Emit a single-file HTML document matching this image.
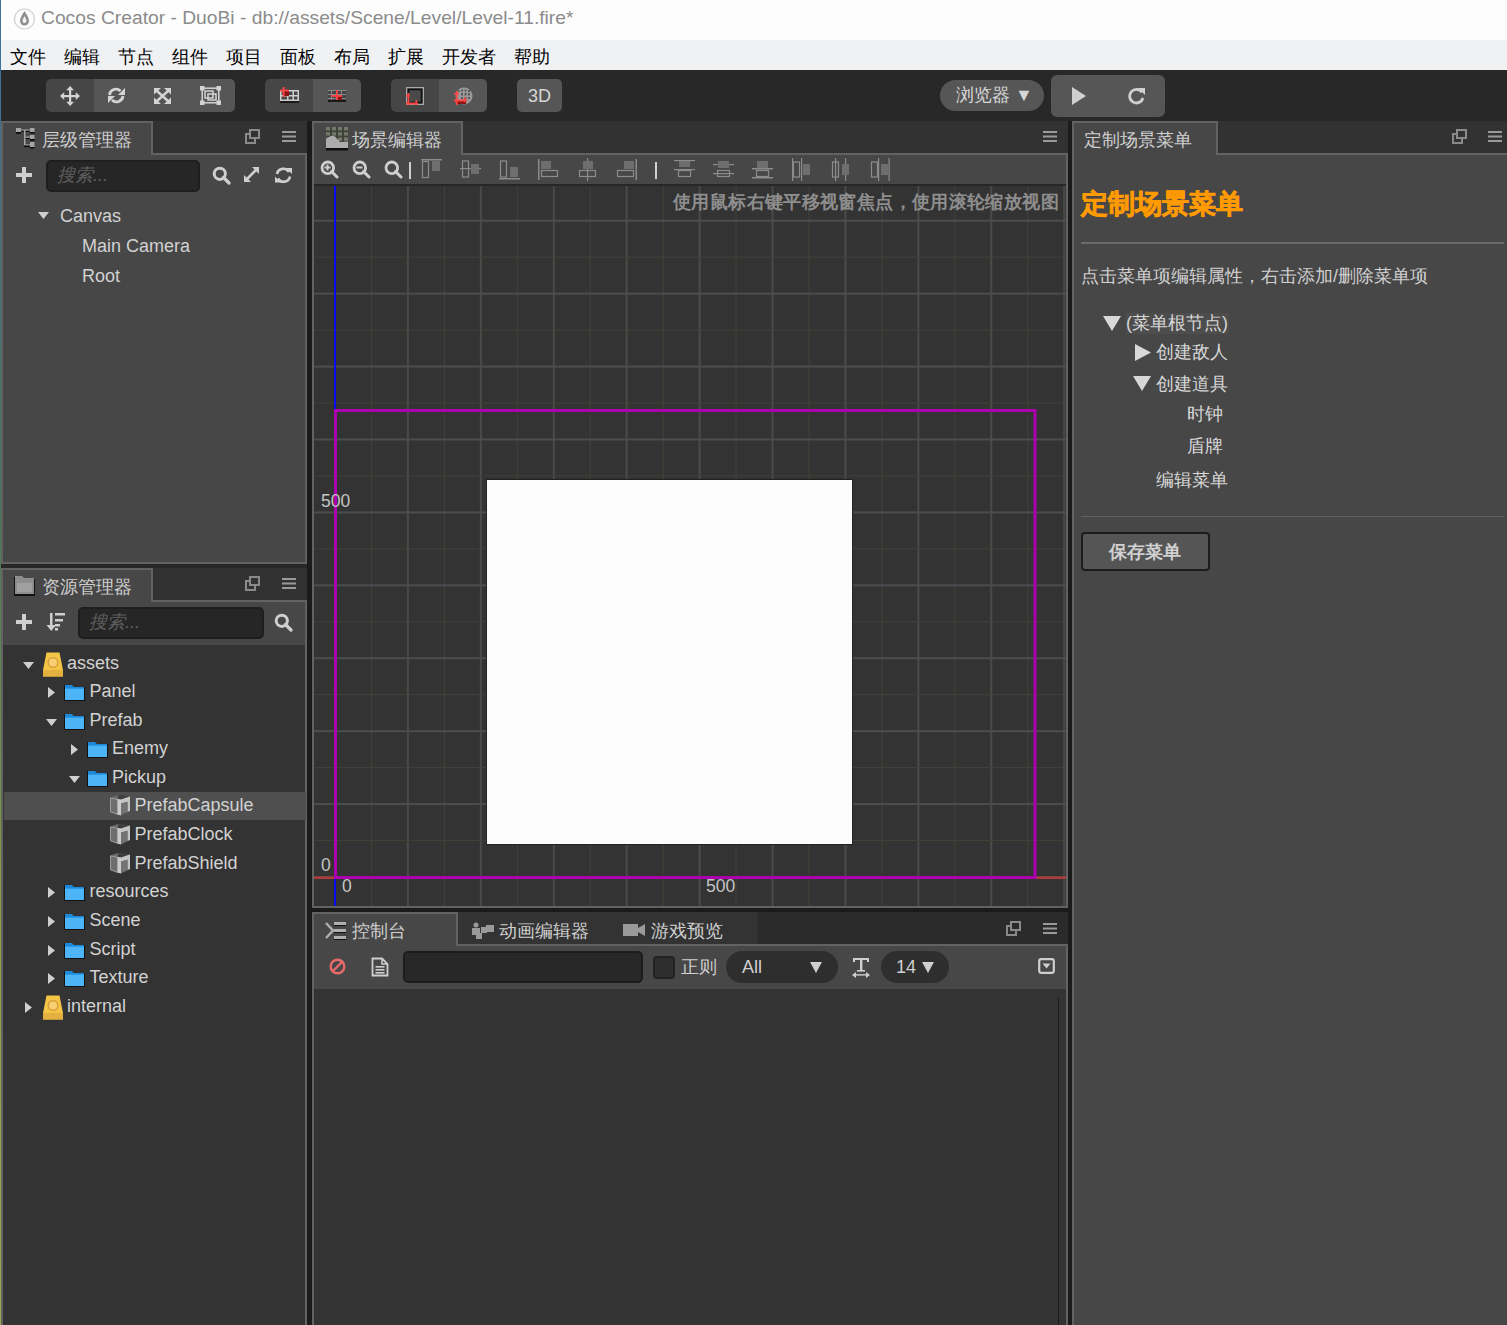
<!DOCTYPE html>
<html><head><meta charset="utf-8"><title>Cocos Creator</title>
<style>
html,body{margin:0;padding:0;}
body{width:1507px;height:1325px;overflow:hidden;position:relative;background:#1b1b1b;font-family:'Liberation Sans',sans-serif;}
svg{display:block;}
</style></head><body>
<div style="position:absolute;left:0px;top:0px;width:1507px;height:40px;background:#fdfdfd;"></div>
<div style="position:absolute;left:0;top:0;width:1px;height:1325px;background:linear-gradient(#3d6fa0,#4a7a5a 40%,#8fa040 70%,#9aaa50)"></div>
<svg style="position:absolute;left:13px;top:8px;" width="23" height="22" viewBox="0 0 23 22"><circle cx="11.5" cy="11" r="10" fill="none" stroke="#d0d0d0" stroke-width="1.2"/><path d="M11.5 3 C9 7 7 10 7 13 a4.5 4.5 0 0 0 9 0 C16 10 14 7 11.5 3z" fill="#8f8f8f"/><path d="M11.5 8 C10.5 10 9.5 11.5 9.5 13 a2 2 0 0 0 4 0 C13.5 11.5 12.5 10 11.5 8z" fill="#f4f4f4"/></svg>
<div style="position:absolute;left:41px;top:7px;font-size:19.25px;line-height:22px;color:#8b8b8b;white-space:nowrap;">Cocos Creator - DuoBi - db://assets/Scene/Level/Level-11.fire*</div>
<div style="position:absolute;left:1px;top:40px;width:1506px;height:30px;background:#f0f1f3;"></div>
<div style="position:absolute;left:10px;top:47px;font-size:18px;line-height:20px;color:#000;white-space:nowrap;">文件</div>
<div style="position:absolute;left:64px;top:47px;font-size:18px;line-height:20px;color:#000;white-space:nowrap;">编辑</div>
<div style="position:absolute;left:118px;top:47px;font-size:18px;line-height:20px;color:#000;white-space:nowrap;">节点</div>
<div style="position:absolute;left:172px;top:47px;font-size:18px;line-height:20px;color:#000;white-space:nowrap;">组件</div>
<div style="position:absolute;left:226px;top:47px;font-size:18px;line-height:20px;color:#000;white-space:nowrap;">项目</div>
<div style="position:absolute;left:280px;top:47px;font-size:18px;line-height:20px;color:#000;white-space:nowrap;">面板</div>
<div style="position:absolute;left:334px;top:47px;font-size:18px;line-height:20px;color:#000;white-space:nowrap;">布局</div>
<div style="position:absolute;left:388px;top:47px;font-size:18px;line-height:20px;color:#000;white-space:nowrap;">扩展</div>
<div style="position:absolute;left:442px;top:47px;font-size:18px;line-height:20px;color:#000;white-space:nowrap;">开发者</div>
<div style="position:absolute;left:514px;top:47px;font-size:18px;line-height:20px;color:#000;white-space:nowrap;">帮助</div>
<div style="position:absolute;left:1px;top:70px;width:1506px;height:51px;background:#282828;"></div>
<div style="position:absolute;left:46px;top:79px;width:189px;height:33px;border-radius:5px;overflow:hidden;"><div style="position:absolute;left:0px;top:0;width:48px;height:33px;background:#464646"></div><div style="position:absolute;left:48px;top:0;width:141px;height:33px;background:#565656"></div></div>
<div style="position:absolute;left:265px;top:79px;width:96px;height:33px;border-radius:5px;overflow:hidden;"><div style="position:absolute;left:0px;top:0;width:48px;height:33px;background:#464646"></div><div style="position:absolute;left:48px;top:0;width:48px;height:33px;background:#565656"></div></div>
<div style="position:absolute;left:391px;top:79px;width:96px;height:33px;border-radius:5px;overflow:hidden;"><div style="position:absolute;left:0px;top:0;width:48px;height:33px;background:#464646"></div><div style="position:absolute;left:48px;top:0;width:48px;height:33px;background:#565656"></div></div>
<div style="position:absolute;left:517px;top:79px;width:45px;height:33px;border-radius:5px;overflow:hidden;"><div style="position:absolute;left:0px;top:0;width:45px;height:33px;background:#565656"></div></div>
<div style="position:absolute;left:517px;top:86px;font-size:18px;line-height:20px;color:#d6d6d6;white-space:nowrap;width:45px;text-align:center;">3D</div>
<svg style="position:absolute;left:60px;top:86px;" width="20" height="20" viewBox="0 0 20 20"><g fill="#d4d4d4"><rect x="9" y="3" width="2.2" height="14"/><rect x="3" y="9" width="14" height="2.2"/><path d="M10.1 0 L14 4.2 H6.2Z M10.1 20 L14 15.8 H6.2Z M0 10.1 L4.2 6.2 V14Z M20 10.1 L15.8 6.2 V14Z"/></g></svg>
<svg style="position:absolute;left:107px;top:87px;" width="19" height="17" viewBox="0 0 19 17"><g fill="none" stroke="#d4d4d4" stroke-width="2.8"><path d="M2.5 8 A6.5 6.5 0 0 1 13.5 4"/><path d="M16 9 A6.5 6.5 0 0 1 5 13"/></g><path d="M18 1 V8 H11Z" fill="#d4d4d4"/><path d="M1 16 V9 H8Z" fill="#d4d4d4"/></svg>
<svg style="position:absolute;left:154px;top:88px;" width="17" height="16" viewBox="0 0 17 16"><g stroke="#d4d4d4" stroke-width="2.4" fill="none"><path d="M3 3 L14 13 M14 3 L3 13"/></g><g fill="#d4d4d4"><path d="M0 0 H7 L0 6.5Z M17 0 V6.5 L10 0Z M0 16 V9.5 L7 16Z M17 16 H10 L17 9.5Z"/></g></svg>
<svg style="position:absolute;left:200px;top:86px;" width="21" height="19" viewBox="0 0 21 19"><g fill="none" stroke="#d4d4d4" stroke-width="1.5"><rect x="2.2" y="2.2" width="16.6" height="14.6"/><rect x="5" y="5" width="8" height="7"/><rect x="8" y="8" width="8" height="6"/></g><g fill="#d4d4d4"><rect x="0" y="0" width="4.5" height="4.5"/><rect x="16.5" y="0" width="4.5" height="4.5"/><rect x="0" y="14.5" width="4.5" height="4.5"/><rect x="16.5" y="14.5" width="4.5" height="4.5"/></g></svg>
<svg style="position:absolute;left:280px;top:87px;" width="19" height="16" viewBox="0 0 19 16"><g fill="#cfcfcf"><rect x="0" y="3" width="19" height="1.5"/><rect x="0" y="8" width="19" height="1.5"/><rect x="0" y="12.5" width="19" height="1.5"/><rect x="0" y="3" width="1.5" height="11"/><rect x="7" y="3" width="1.5" height="11"/><rect x="12.5" y="3" width="1.5" height="11"/><rect x="17.5" y="3" width="1.5" height="11"/></g><rect x="4" y="4" width="5" height="5" fill="#8a1515"/><g fill="#ff4545"><rect x="2.7" y="0" width="1.8" height="10"/><rect x="0" y="2.6" width="9" height="1.8"/></g><rect x="0" y="14" width="19" height="2" fill="#1a1a1a"/></svg>
<svg style="position:absolute;left:328px;top:90px;" width="18" height="12" viewBox="0 0 18 12"><rect x="0" y="0" width="18" height="10" fill="#444"/><g fill="#8a8a8a"><rect x="0" y="0" width="18" height="1"/><rect x="0" y="4" width="18" height="1"/><rect x="0" y="8" width="18" height="1"/><rect x="3" y="0" width="1" height="10"/><rect x="8" y="0" width="1" height="10"/><rect x="13" y="0" width="1" height="10"/></g><rect x="9" y="6" width="5" height="4" fill="#8a1515"/><g fill="#ff4545"><rect x="8" y="0" width="1.8" height="10"/><rect x="3" y="5" width="11" height="1.8"/></g><rect x="0" y="10" width="18" height="2" fill="#1a1a1a"/></svg>
<svg style="position:absolute;left:406px;top:87px;" width="18" height="18" viewBox="0 0 18 18"><rect x="0.6" y="0.6" width="16.8" height="16.8" fill="none" stroke="#a8a8a8" stroke-width="1.2"/><rect x="2.5" y="2.5" width="13" height="13" fill="#4a4a4a" stroke="#111" stroke-width="1.6"/><g fill="#ff4545"><rect x="1.5" y="6" width="1.8" height="12"/><rect x="0" y="15.5" width="12" height="2"/><rect x="0" y="8" width="4" height="1.5"/><rect x="9.5" y="13" width="1.5" height="5"/></g></svg>
<svg style="position:absolute;left:454px;top:87px;" width="19" height="18" viewBox="0 0 19 18"><circle cx="10" cy="9" r="8.5" fill="#9a9a9a"/><g fill="#5a5a5a"><rect x="3.5" y="3" width="2" height="2"/><rect x="7" y="2.5" width="2" height="2"/><rect x="10.5" y="2.5" width="2" height="2"/><rect x="14" y="3" width="2" height="2"/><rect x="7" y="6" width="2" height="2.5"/><rect x="10.5" y="6" width="2" height="2.5"/><rect x="14" y="6" width="2" height="2.5"/><rect x="7" y="10" width="2" height="2"/><rect x="10.5" y="10" width="2" height="2"/><rect x="14" y="10" width="2" height="2"/></g><rect x="3" y="14" width="9" height="3" fill="#8a1515"/><g fill="#ff4545"><rect x="1.8" y="4" width="1.8" height="14"/><rect x="0" y="12.5" width="13" height="2"/><rect x="0" y="6" width="5" height="1.5"/><rect x="10" y="10" width="1.5" height="5"/></g></svg>
<div style="position:absolute;left:940px;top:80px;width:104px;height:31px;border-radius:16px;background:#565656;"></div>
<div style="position:absolute;left:956px;top:85px;font-size:18px;line-height:20px;color:#d6d6d6;white-space:nowrap;">浏览器 ▼</div>
<div style="position:absolute;left:1051px;top:75px;width:114px;height:42px;border-radius:6px;background:#565656;"></div>
<svg style="position:absolute;left:1071px;top:86px;" width="16" height="20" viewBox="0 0 16 20"><path d="M1 1 L15 10 L1 19Z" fill="#d0d0d0"/></svg>
<svg style="position:absolute;left:1127px;top:86px;" width="19" height="19" viewBox="0 0 19 19"><path d="M15 6.2 A6.8 6.8 0 1 0 16 12" fill="none" stroke="#d0d0d0" stroke-width="2.8"/><path d="M11 2 L18 2 L18 9Z" fill="#d0d0d0"/></svg>
<div style="position:absolute;left:1px;top:121px;width:306px;height:33px;background:#323232;"></div>
<div style="position:absolute;left:1px;top:153px;width:306px;height:411px;background:#474747;border:2px solid #626262;box-sizing:border-box;"></div>
<div style="position:absolute;left:1px;top:121px;width:152px;height:34px;background:#474747;border:2px solid #626262;border-bottom:none;box-sizing:border-box;"></div>
<svg style="position:absolute;left:16px;top:127px;" width="19" height="22" viewBox="0 0 19 22"><g fill="#a4a4a4"><rect x="0" y="1" width="5" height="4"/><rect x="14" y="1" width="4.5" height="4"/><rect x="14" y="8" width="4.5" height="4"/><rect x="14" y="15" width="4.5" height="5"/><rect x="5" y="2.5" width="9" height="1.2"/><rect x="8" y="3" width="1.5" height="15.5"/><rect x="9.5" y="9.5" width="4.5" height="1.2"/><rect x="9.5" y="17.3" width="4.5" height="1.2"/></g><g fill="#0c0c0c"><rect x="0" y="5" width="5" height="1.8"/><rect x="5" y="3.8" width="3" height="1"/><rect x="9.5" y="3.8" width="4.5" height="1"/><rect x="14" y="5" width="4.5" height="1.5"/><rect x="14" y="12" width="4.5" height="1.8"/><rect x="9.5" y="11" width="4.5" height="1"/><rect x="8" y="18.6" width="6" height="1.5"/><rect x="14" y="20" width="4.5" height="1.5"/></g></svg>
<div style="position:absolute;left:42px;top:130px;font-size:18px;line-height:20px;color:#cfcfcf;white-space:nowrap;">层级管理器</div>
<svg style="position:absolute;left:245px;top:129px;" width="15" height="15" viewBox="0 0 15 15"><g fill="none" stroke="#8a8a8a" stroke-width="2"><rect x="5" y="1" width="9" height="8"/><path d="M5 5 H1 V14 H10 V9"/></g></svg>
<svg style="position:absolute;left:282px;top:131px;" width="14" height="11" viewBox="0 0 14 11"><g fill="#9a9a9a"><rect x="0" y="0" width="14" height="2"/><rect x="0" y="4.5" width="14" height="2"/><rect x="0" y="9" width="14" height="2"/></g></svg>
<svg style="position:absolute;left:16px;top:167px;" width="16" height="16" viewBox="0 0 16 16"><g fill="#cfcfcf"><rect x="6" y="0" width="4" height="16"/><rect x="0" y="6" width="16" height="4"/></g></svg>
<div style="position:absolute;left:46px;top:160px;width:154px;height:32px;background:#262626;border:2px solid #1e1e1e;border-radius:5px;box-sizing:border-box;"></div>
<div style="position:absolute;left:57px;top:165px;font-size:18px;line-height:20px;color:#5e5e5e;white-space:nowrap;font-style:italic;">搜索...</div>
<svg style="position:absolute;left:212px;top:166px;" width="19" height="19" viewBox="0 0 19 19"><circle cx="7.8" cy="7.8" r="5.6" fill="none" stroke="#cfcfcf" stroke-width="3"/><path d="M11.5 11.5 L17 17" stroke="#cfcfcf" stroke-width="3.2" stroke-linecap="round"/></svg>
<svg style="position:absolute;left:243px;top:166px;" width="17" height="17" viewBox="0 0 17 17"><g fill="#cfcfcf"><path d="M9 1 H16 V8 Z"/><path d="M1 9 V16 H8 Z"/></g><path d="M13 4 L4 13" stroke="#cfcfcf" stroke-width="2.6"/></svg>
<svg style="position:absolute;left:274px;top:166px;" width="19" height="18" viewBox="0 0 19 18"><g fill="none" stroke="#cfcfcf" stroke-width="2.6"><path d="M3 8 A6.5 6.5 0 0 1 15 6"/><path d="M16 10.5 A6.5 6.5 0 0 1 4 12.5"/></g><path d="M12 2 L18 2 L18 8 Z" fill="#cfcfcf"/><path d="M7 16.5 L1 16.5 L1 10.5 Z" fill="#cfcfcf"/></svg>
<svg style="position:absolute;left:38px;top:212px;" width="11" height="7" viewBox="0 0 11 7"><path d="M0 0 H11 L5.5 7Z" fill="#cfcfcf"/></svg>
<div style="position:absolute;left:60px;top:206px;font-size:18px;line-height:20px;color:#d2d2d2;white-space:nowrap;">Canvas</div>
<div style="position:absolute;left:82px;top:236px;font-size:18px;line-height:20px;color:#d2d2d2;white-space:nowrap;">Main Camera</div>
<div style="position:absolute;left:82px;top:266px;font-size:18px;line-height:20px;color:#d2d2d2;white-space:nowrap;">Root</div>
<div style="position:absolute;left:1px;top:564px;width:306px;height:4px;background:#282828;"></div>
<div style="position:absolute;left:1px;top:568px;width:306px;height:33px;background:#323232;"></div>
<div style="position:absolute;left:1px;top:600px;width:306px;height:730px;background:#333333;border:2px solid #626262;border-bottom:none;box-sizing:border-box;"></div>
<div style="position:absolute;left:3px;top:602px;width:302px;height:43px;background:#474747;"></div>
<div style="position:absolute;left:1px;top:568px;width:152px;height:34px;background:#474747;border:2px solid #626262;border-bottom:none;box-sizing:border-box;"></div>
<svg style="position:absolute;left:13px;top:575px;" width="23" height="23" viewBox="0 0 23 23"><path d="M1 2 H9 L11 4 H22 V21 H1Z" fill="#111"/><path d="M2 1 H9 L11 3 H21 V19 H2Z" fill="#8d8d8d"/><rect x="4" y="8" width="15" height="9" fill="#a0a0a0"/></svg>
<div style="position:absolute;left:42px;top:577px;font-size:18px;line-height:20px;color:#cfcfcf;white-space:nowrap;">资源管理器</div>
<svg style="position:absolute;left:245px;top:576px;" width="15" height="15" viewBox="0 0 15 15"><g fill="none" stroke="#8a8a8a" stroke-width="2"><rect x="5" y="1" width="9" height="8"/><path d="M5 5 H1 V14 H10 V9"/></g></svg>
<svg style="position:absolute;left:282px;top:578px;" width="14" height="11" viewBox="0 0 14 11"><g fill="#9a9a9a"><rect x="0" y="0" width="14" height="2"/><rect x="0" y="4.5" width="14" height="2"/><rect x="0" y="9" width="14" height="2"/></g></svg>
<svg style="position:absolute;left:16px;top:614px;" width="16" height="16" viewBox="0 0 16 16"><g fill="#cfcfcf"><rect x="6" y="0" width="4" height="16"/><rect x="0" y="6" width="16" height="4"/></g></svg>
<svg style="position:absolute;left:46px;top:612px;" width="20" height="20" viewBox="0 0 20 20"><g fill="#cfcfcf"><rect x="4" y="1" width="2.5" height="14"/><path d="M0.5 13 H10 L5.25 19Z"/><rect x="9" y="1" width="10" height="2.5"/><rect x="9" y="7" width="8" height="2.5"/><rect x="9" y="12" width="5" height="2.5"/><rect x="9" y="16" width="3" height="2.5"/></g></svg>
<div style="position:absolute;left:78px;top:607px;width:186px;height:32px;background:#262626;border:2px solid #1e1e1e;border-radius:5px;box-sizing:border-box;"></div>
<div style="position:absolute;left:89px;top:612px;font-size:18px;line-height:20px;color:#5e5e5e;white-space:nowrap;font-style:italic;">搜索...</div>
<svg style="position:absolute;left:274px;top:613px;" width="19" height="19" viewBox="0 0 19 19"><circle cx="7.8" cy="7.8" r="5.6" fill="none" stroke="#cfcfcf" stroke-width="3"/><path d="M11.5 11.5 L17 17" stroke="#cfcfcf" stroke-width="3.2" stroke-linecap="round"/></svg>
<svg style="position:absolute;left:23px;top:662px;" width="11" height="7" viewBox="0 0 11 7"><path d="M0 0 H11 L5.5 7Z" fill="#cfcfcf"/></svg>
<svg style="position:absolute;left:42px;top:652px;" width="22" height="25" viewBox="0 0 22 25"><path d="M4.5 0.5 H17.5 L21 18 V24.5 H1 V18Z" fill="#f4c446"/><circle cx="11" cy="10.5" r="4.8" fill="#f9cf74" stroke="#d9a03a" stroke-width="1.5"/><rect x="1" y="18" width="20" height="6.5" fill="#e4b040"/></svg>
<div style="position:absolute;left:67px;top:653px;font-size:18px;line-height:20px;color:#d2d2d2;white-space:nowrap;">assets</div>
<svg style="position:absolute;left:48px;top:687px;" width="7" height="11" viewBox="0 0 7 11"><path d="M0 0 L7 5.5 L0 11Z" fill="#cfcfcf"/></svg>
<svg style="position:absolute;left:64px;top:684px;" width="21" height="17" viewBox="0 0 21 17"><path d="M0 1 H8 L10 3 H21 V17 H0Z" fill="#111"/><path d="M1 1 H8 L10 3 H20 V5 H1Z" fill="#1f88d8"/><rect x="1" y="5" width="19" height="11" fill="#4cb4f7"/><rect x="1" y="4" width="19" height="1" fill="#2a9be8"/></svg>
<div style="position:absolute;left:89.5px;top:681px;font-size:18px;line-height:20px;color:#d2d2d2;white-space:nowrap;">Panel</div>
<svg style="position:absolute;left:46px;top:719px;" width="11" height="7" viewBox="0 0 11 7"><path d="M0 0 H11 L5.5 7Z" fill="#cfcfcf"/></svg>
<svg style="position:absolute;left:64px;top:713px;" width="21" height="17" viewBox="0 0 21 17"><path d="M0 1 H8 L10 3 H21 V17 H0Z" fill="#111"/><path d="M1 1 H8 L10 3 H20 V5 H1Z" fill="#1f88d8"/><rect x="1" y="5" width="19" height="11" fill="#4cb4f7"/><rect x="1" y="4" width="19" height="1" fill="#2a9be8"/></svg>
<div style="position:absolute;left:89.5px;top:710px;font-size:18px;line-height:20px;color:#d2d2d2;white-space:nowrap;">Prefab</div>
<svg style="position:absolute;left:71px;top:744px;" width="7" height="11" viewBox="0 0 7 11"><path d="M0 0 L7 5.5 L0 11Z" fill="#cfcfcf"/></svg>
<svg style="position:absolute;left:87px;top:741px;" width="21" height="17" viewBox="0 0 21 17"><path d="M0 1 H8 L10 3 H21 V17 H0Z" fill="#111"/><path d="M1 1 H8 L10 3 H20 V5 H1Z" fill="#1f88d8"/><rect x="1" y="5" width="19" height="11" fill="#4cb4f7"/><rect x="1" y="4" width="19" height="1" fill="#2a9be8"/></svg>
<div style="position:absolute;left:112px;top:738px;font-size:18px;line-height:20px;color:#d2d2d2;white-space:nowrap;">Enemy</div>
<svg style="position:absolute;left:69px;top:776px;" width="11" height="7" viewBox="0 0 11 7"><path d="M0 0 H11 L5.5 7Z" fill="#cfcfcf"/></svg>
<svg style="position:absolute;left:87px;top:770px;" width="21" height="17" viewBox="0 0 21 17"><path d="M0 1 H8 L10 3 H21 V17 H0Z" fill="#111"/><path d="M1 1 H8 L10 3 H20 V5 H1Z" fill="#1f88d8"/><rect x="1" y="5" width="19" height="11" fill="#4cb4f7"/><rect x="1" y="4" width="19" height="1" fill="#2a9be8"/></svg>
<div style="position:absolute;left:112px;top:767px;font-size:18px;line-height:20px;color:#d2d2d2;white-space:nowrap;">Pickup</div>
<div style="position:absolute;left:4px;top:792px;width:302px;height:28px;background:#4f4f4f;"></div>
<svg style="position:absolute;left:109px;top:794px;" width="22" height="22" viewBox="0 0 22 22"><path d="M1 3.5 L9 1 L21 2.5 V17 L12 21.5 L1 18Z" fill="#6a6a6a"/><path d="M1.5 4 L9 5.5 V20.5 L1.5 17.8Z" fill="#6e6e6e" stroke="#9c9c9c" stroke-width="1"/><path d="M9 1.5 L13 1 L20.5 2.8 L12 5.5 L9 5Z" fill="#3e3e3e"/><path d="M8.5 5 L12 5.5 V21.5 L8.5 20.5Z" fill="#cacaca"/><path d="M12 5.5 L21 2.5 V17 L18.5 17.8 V7.8 L12 9.5Z" fill="#c4c4c4"/><path d="M12 9.5 L18.5 7.8 V17.8 L12 20Z" fill="#737373"/></svg>
<div style="position:absolute;left:134.5px;top:795px;font-size:18px;line-height:20px;color:#d2d2d2;white-space:nowrap;">PrefabCapsule</div>
<svg style="position:absolute;left:109px;top:823px;" width="22" height="22" viewBox="0 0 22 22"><path d="M1 3.5 L9 1 L21 2.5 V17 L12 21.5 L1 18Z" fill="#6a6a6a"/><path d="M1.5 4 L9 5.5 V20.5 L1.5 17.8Z" fill="#6e6e6e" stroke="#9c9c9c" stroke-width="1"/><path d="M9 1.5 L13 1 L20.5 2.8 L12 5.5 L9 5Z" fill="#3e3e3e"/><path d="M8.5 5 L12 5.5 V21.5 L8.5 20.5Z" fill="#cacaca"/><path d="M12 5.5 L21 2.5 V17 L18.5 17.8 V7.8 L12 9.5Z" fill="#c4c4c4"/><path d="M12 9.5 L18.5 7.8 V17.8 L12 20Z" fill="#737373"/></svg>
<div style="position:absolute;left:134.5px;top:824px;font-size:18px;line-height:20px;color:#d2d2d2;white-space:nowrap;">PrefabClock</div>
<svg style="position:absolute;left:109px;top:852px;" width="22" height="22" viewBox="0 0 22 22"><path d="M1 3.5 L9 1 L21 2.5 V17 L12 21.5 L1 18Z" fill="#6a6a6a"/><path d="M1.5 4 L9 5.5 V20.5 L1.5 17.8Z" fill="#6e6e6e" stroke="#9c9c9c" stroke-width="1"/><path d="M9 1.5 L13 1 L20.5 2.8 L12 5.5 L9 5Z" fill="#3e3e3e"/><path d="M8.5 5 L12 5.5 V21.5 L8.5 20.5Z" fill="#cacaca"/><path d="M12 5.5 L21 2.5 V17 L18.5 17.8 V7.8 L12 9.5Z" fill="#c4c4c4"/><path d="M12 9.5 L18.5 7.8 V17.8 L12 20Z" fill="#737373"/></svg>
<div style="position:absolute;left:134.5px;top:853px;font-size:18px;line-height:20px;color:#d2d2d2;white-space:nowrap;">PrefabShield</div>
<svg style="position:absolute;left:48px;top:887px;" width="7" height="11" viewBox="0 0 7 11"><path d="M0 0 L7 5.5 L0 11Z" fill="#cfcfcf"/></svg>
<svg style="position:absolute;left:64px;top:884px;" width="21" height="17" viewBox="0 0 21 17"><path d="M0 1 H8 L10 3 H21 V17 H0Z" fill="#111"/><path d="M1 1 H8 L10 3 H20 V5 H1Z" fill="#1f88d8"/><rect x="1" y="5" width="19" height="11" fill="#4cb4f7"/><rect x="1" y="4" width="19" height="1" fill="#2a9be8"/></svg>
<div style="position:absolute;left:89.5px;top:881px;font-size:18px;line-height:20px;color:#d2d2d2;white-space:nowrap;">resources</div>
<svg style="position:absolute;left:48px;top:916px;" width="7" height="11" viewBox="0 0 7 11"><path d="M0 0 L7 5.5 L0 11Z" fill="#cfcfcf"/></svg>
<svg style="position:absolute;left:64px;top:913px;" width="21" height="17" viewBox="0 0 21 17"><path d="M0 1 H8 L10 3 H21 V17 H0Z" fill="#111"/><path d="M1 1 H8 L10 3 H20 V5 H1Z" fill="#1f88d8"/><rect x="1" y="5" width="19" height="11" fill="#4cb4f7"/><rect x="1" y="4" width="19" height="1" fill="#2a9be8"/></svg>
<div style="position:absolute;left:89.5px;top:910px;font-size:18px;line-height:20px;color:#d2d2d2;white-space:nowrap;">Scene</div>
<svg style="position:absolute;left:48px;top:945px;" width="7" height="11" viewBox="0 0 7 11"><path d="M0 0 L7 5.5 L0 11Z" fill="#cfcfcf"/></svg>
<svg style="position:absolute;left:64px;top:942px;" width="21" height="17" viewBox="0 0 21 17"><path d="M0 1 H8 L10 3 H21 V17 H0Z" fill="#111"/><path d="M1 1 H8 L10 3 H20 V5 H1Z" fill="#1f88d8"/><rect x="1" y="5" width="19" height="11" fill="#4cb4f7"/><rect x="1" y="4" width="19" height="1" fill="#2a9be8"/></svg>
<div style="position:absolute;left:89.5px;top:939px;font-size:18px;line-height:20px;color:#d2d2d2;white-space:nowrap;">Script</div>
<svg style="position:absolute;left:48px;top:973px;" width="7" height="11" viewBox="0 0 7 11"><path d="M0 0 L7 5.5 L0 11Z" fill="#cfcfcf"/></svg>
<svg style="position:absolute;left:64px;top:970px;" width="21" height="17" viewBox="0 0 21 17"><path d="M0 1 H8 L10 3 H21 V17 H0Z" fill="#111"/><path d="M1 1 H8 L10 3 H20 V5 H1Z" fill="#1f88d8"/><rect x="1" y="5" width="19" height="11" fill="#4cb4f7"/><rect x="1" y="4" width="19" height="1" fill="#2a9be8"/></svg>
<div style="position:absolute;left:89.5px;top:967px;font-size:18px;line-height:20px;color:#d2d2d2;white-space:nowrap;">Texture</div>
<svg style="position:absolute;left:25px;top:1002px;" width="7" height="11" viewBox="0 0 7 11"><path d="M0 0 L7 5.5 L0 11Z" fill="#cfcfcf"/></svg>
<svg style="position:absolute;left:42px;top:995px;" width="22" height="25" viewBox="0 0 22 25"><path d="M4.5 0.5 H17.5 L21 18 V24.5 H1 V18Z" fill="#f4c446"/><circle cx="11" cy="10.5" r="4.8" fill="#f9cf74" stroke="#d9a03a" stroke-width="1.5"/><rect x="1" y="18" width="20" height="6.5" fill="#e4b040"/></svg>
<div style="position:absolute;left:67px;top:996px;font-size:18px;line-height:20px;color:#d2d2d2;white-space:nowrap;">internal</div>
<div style="position:absolute;left:312px;top:121px;width:756px;height:33px;background:#323232;"></div>
<div style="position:absolute;left:312px;top:153px;width:756px;height:755px;background:#474747;border:2px solid #626262;box-sizing:border-box;"></div>
<div style="position:absolute;left:312px;top:121px;width:151px;height:34px;background:#474747;border:2px solid #626262;border-bottom:none;box-sizing:border-box;"></div>
<svg style="position:absolute;left:326px;top:127px;" width="22" height="24" viewBox="0 0 22 24"><rect x="0" y="0" width="22" height="21" fill="#3f4238"/><rect x="0" y="0.0" width="4" height="3.4" fill="#74786c"/><rect x="0" y="5.2" width="4" height="3.4" fill="#74786c"/><rect x="0" y="10.4" width="4" height="3.4" fill="#74786c"/><rect x="6" y="0.0" width="4" height="3.4" fill="#74786c"/><rect x="6" y="5.2" width="4" height="3.4" fill="#74786c"/><rect x="6" y="10.4" width="4" height="3.4" fill="#74786c"/><rect x="12" y="0.0" width="4" height="3.4" fill="#74786c"/><rect x="12" y="5.2" width="4" height="3.4" fill="#74786c"/><rect x="12" y="10.4" width="4" height="3.4" fill="#74786c"/><rect x="18" y="0.0" width="4" height="3.4" fill="#74786c"/><rect x="18" y="5.2" width="4" height="3.4" fill="#74786c"/><rect x="18" y="10.4" width="4" height="3.4" fill="#74786c"/><path d="M0 21 V12.5 Q1 10.5 3 10 L5 9 Q7 8.5 9 9.5 L11 12 L13.5 13.5 V15 L16 15 L22 14.5 V21Z" fill="#acacac"/><rect x="0" y="21" width="22" height="2.5" fill="#0e0e0e"/></svg>
<div style="position:absolute;left:352px;top:130px;font-size:18px;line-height:20px;color:#cfcfcf;white-space:nowrap;">场景编辑器</div>
<svg style="position:absolute;left:1043px;top:131px;" width="14" height="11" viewBox="0 0 14 11"><g fill="#9a9a9a"><rect x="0" y="0" width="14" height="2"/><rect x="0" y="4.5" width="14" height="2"/><rect x="0" y="9" width="14" height="2"/></g></svg>
<svg style="position:absolute;left:320px;top:160px;" width="19" height="19" viewBox="0 0 19 19"><circle cx="7.8" cy="7.8" r="5.8" fill="none" stroke="#cfcfcf" stroke-width="2.8"/><path d="M11.5 11.5 L17 17" stroke="#cfcfcf" stroke-width="3" stroke-linecap="round"/><path d="M4.5 7.5 H10.5 M7.5 4.5 V10.5" stroke="#cfcfcf" stroke-width="2"/></svg>
<svg style="position:absolute;left:352px;top:160px;" width="19" height="19" viewBox="0 0 19 19"><circle cx="7.8" cy="7.8" r="5.8" fill="none" stroke="#cfcfcf" stroke-width="2.8"/><path d="M11.5 11.5 L17 17" stroke="#cfcfcf" stroke-width="3" stroke-linecap="round"/><path d="M4.5 7.5 H10.5" stroke="#cfcfcf" stroke-width="2"/></svg>
<svg style="position:absolute;left:384px;top:160px;" width="19" height="19" viewBox="0 0 19 19"><circle cx="7.8" cy="7.8" r="5.8" fill="none" stroke="#cfcfcf" stroke-width="2.8"/><path d="M11.5 11.5 L17 17" stroke="#cfcfcf" stroke-width="3" stroke-linecap="round"/></svg>
<div style="position:absolute;left:409px;top:162px;width:2px;height:17px;background:#cfcfcf;"></div>
<div style="position:absolute;left:655px;top:162px;width:2px;height:17px;background:#cfcfcf;"></div>
<svg style="position:absolute;left:421px;top:158px;" width="22" height="23" viewBox="0 0 22 23"><rect x="0" y="1" width="21" height="1.5" fill="#8c8c8c"/><rect x="1.5" y="3.5" width="6" height="16" fill="none" stroke="#8c8c8c" stroke-width="1.2"/><rect x="11" y="3" width="8" height="10" fill="#6e6e6e"/></svg>
<svg style="position:absolute;left:460px;top:158px;" width="22" height="23" viewBox="0 0 22 23"><rect x="0" y="10" width="21" height="1.2" fill="#8c8c8c"/><rect x="2.5" y="3" width="6" height="16" fill="none" stroke="#8c8c8c" stroke-width="1.2"/><rect x="11" y="6" width="8" height="10" fill="#6e6e6e"/></svg>
<svg style="position:absolute;left:499px;top:158px;" width="22" height="23" viewBox="0 0 22 23"><rect x="0" y="20" width="21" height="1.5" fill="#8c8c8c"/><rect x="1.5" y="3" width="6" height="16" fill="none" stroke="#8c8c8c" stroke-width="1.2"/><rect x="11" y="9" width="8" height="10" fill="#6e6e6e"/></svg>
<svg style="position:absolute;left:538px;top:158px;" width="22" height="23" viewBox="0 0 22 23"><rect x="0" y="1" width="1.5" height="21" fill="#8c8c8c"/><rect x="3" y="3" width="10" height="8" fill="#6e6e6e"/><rect x="3.5" y="12.5" width="16" height="6" fill="none" stroke="#8c8c8c" stroke-width="1.2"/></svg>
<svg style="position:absolute;left:577px;top:158px;" width="22" height="23" viewBox="0 0 22 23"><rect x="10" y="0" width="1.2" height="23" fill="#8c8c8c"/><rect x="6" y="3" width="10" height="8" fill="#6e6e6e"/><rect x="2.5" y="12.5" width="16" height="6" fill="none" stroke="#8c8c8c" stroke-width="1.2"/></svg>
<svg style="position:absolute;left:616px;top:158px;" width="22" height="23" viewBox="0 0 22 23"><rect x="19.5" y="1" width="1.5" height="21" fill="#8c8c8c"/><rect x="8" y="3" width="10" height="8" fill="#6e6e6e"/><rect x="1.5" y="12.5" width="16" height="6" fill="none" stroke="#8c8c8c" stroke-width="1.2"/></svg>
<svg style="position:absolute;left:674px;top:158px;" width="22" height="23" viewBox="0 0 22 23"><rect x="0" y="2" width="21" height="1.2" fill="#8c8c8c"/><rect x="5" y="3" width="11" height="6" fill="#6e6e6e"/><rect x="0" y="11" width="21" height="1.2" fill="#8c8c8c"/><rect x="4.5" y="12.5" width="12" height="6" fill="none" stroke="#8c8c8c" stroke-width="1.2"/></svg>
<svg style="position:absolute;left:713px;top:158px;" width="22" height="23" viewBox="0 0 22 23"><rect x="0" y="6" width="21" height="1.2" fill="#8c8c8c"/><rect x="5" y="3" width="11" height="7" fill="#6e6e6e"/><rect x="0" y="15" width="21" height="1.2" fill="#8c8c8c"/><rect x="4.5" y="12.5" width="12" height="6" fill="none" stroke="#8c8c8c" stroke-width="1.2"/></svg>
<svg style="position:absolute;left:752px;top:158px;" width="22" height="23" viewBox="0 0 22 23"><rect x="5" y="3" width="11" height="7" fill="#6e6e6e"/><rect x="0" y="10" width="21" height="1.5" fill="#8c8c8c"/><rect x="4.5" y="12.5" width="12" height="6" fill="none" stroke="#8c8c8c" stroke-width="1.2"/><rect x="0" y="19" width="21" height="1.5" fill="#8c8c8c"/></svg>
<svg style="position:absolute;left:791px;top:158px;" width="22" height="23" viewBox="0 0 22 23"><rect x="1" y="0" width="1.2" height="23" fill="#8c8c8c"/><rect x="2.5" y="4" width="6" height="15" fill="none" stroke="#8c8c8c" stroke-width="1.2"/><rect x="10" y="0" width="1.2" height="23" fill="#8c8c8c"/><rect x="12" y="6" width="7" height="11" fill="#6e6e6e"/></svg>
<svg style="position:absolute;left:830px;top:158px;" width="22" height="23" viewBox="0 0 22 23"><rect x="5" y="0" width="1.2" height="23" fill="#8c8c8c"/><rect x="2.5" y="4" width="6" height="15" fill="none" stroke="#8c8c8c" stroke-width="1.2"/><rect x="15" y="0" width="1.2" height="23" fill="#8c8c8c"/><rect x="12" y="6" width="7" height="11" fill="#6e6e6e"/></svg>
<svg style="position:absolute;left:869px;top:158px;" width="22" height="23" viewBox="0 0 22 23"><rect x="2.5" y="4" width="6" height="15" fill="none" stroke="#8c8c8c" stroke-width="1.2"/><rect x="9" y="0" width="1.2" height="23" fill="#8c8c8c"/><rect x="12" y="6" width="7" height="11" fill="#6e6e6e"/><rect x="19.5" y="0" width="1.2" height="23" fill="#8c8c8c"/></svg>
<div style="position:absolute;left:314px;top:184px;width:752px;height:722px;background:#333333;overflow:hidden;"><svg width="752" height="722" style="position:absolute;left:0;top:0"><rect x="20.00" y="0" width="2" height="722" fill="#4a4b49"/><rect x="56.96" y="0" width="1" height="722" fill="#414339"/><rect x="92.92" y="0" width="2" height="722" fill="#4a4b49"/><rect x="129.88" y="0" width="1" height="722" fill="#414339"/><rect x="165.84" y="0" width="2" height="722" fill="#4a4b49"/><rect x="202.80" y="0" width="1" height="722" fill="#414339"/><rect x="238.76" y="0" width="2" height="722" fill="#4a4b49"/><rect x="275.72" y="0" width="1" height="722" fill="#414339"/><rect x="311.68" y="0" width="2" height="722" fill="#4a4b49"/><rect x="348.64" y="0" width="1" height="722" fill="#414339"/><rect x="384.60" y="0" width="2" height="722" fill="#4a4b49"/><rect x="421.56" y="0" width="1" height="722" fill="#414339"/><rect x="457.52" y="0" width="2" height="722" fill="#4a4b49"/><rect x="494.48" y="0" width="1" height="722" fill="#414339"/><rect x="530.44" y="0" width="2" height="722" fill="#4a4b49"/><rect x="567.40" y="0" width="1" height="722" fill="#414339"/><rect x="603.36" y="0" width="2" height="722" fill="#4a4b49"/><rect x="640.32" y="0" width="1" height="722" fill="#414339"/><rect x="676.28" y="0" width="2" height="722" fill="#4a4b49"/><rect x="713.24" y="0" width="1" height="722" fill="#414339"/><rect x="749.20" y="0" width="2" height="722" fill="#4a4b49"/><rect x="0" y="692.00" width="752" height="2" fill="#4b4d51"/><rect x="0" y="656.04" width="752" height="1" fill="#414339"/><rect x="0" y="619.08" width="752" height="2" fill="#4b4d51"/><rect x="0" y="583.12" width="752" height="1" fill="#414339"/><rect x="0" y="546.16" width="752" height="2" fill="#4b4d51"/><rect x="0" y="510.20" width="752" height="1" fill="#414339"/><rect x="0" y="473.24" width="752" height="2" fill="#4b4d51"/><rect x="0" y="437.28" width="752" height="1" fill="#414339"/><rect x="0" y="400.32" width="752" height="2" fill="#4b4d51"/><rect x="0" y="364.36" width="752" height="1" fill="#414339"/><rect x="0" y="327.40" width="752" height="2" fill="#4b4d51"/><rect x="0" y="291.44" width="752" height="1" fill="#414339"/><rect x="0" y="254.48" width="752" height="2" fill="#4b4d51"/><rect x="0" y="218.52" width="752" height="1" fill="#414339"/><rect x="0" y="181.56" width="752" height="2" fill="#4b4d51"/><rect x="0" y="145.60" width="752" height="1" fill="#414339"/><rect x="0" y="108.64" width="752" height="2" fill="#4b4d51"/><rect x="0" y="72.68" width="752" height="1" fill="#414339"/><rect x="0" y="35.72" width="752" height="2" fill="#4b4d51"/><rect x="0" y="-0.24" width="752" height="1" fill="#414339"/><rect x="20" y="0" width="2" height="722" fill="#0b0bf0"/><rect x="0" y="692.5" width="752" height="2.5" fill="#b03a3a"/><rect x="21.5" y="226.5" width="699.5" height="467" fill="none" stroke="#ac00b0" stroke-width="3"/><rect x="172" y="295" width="367" height="366" fill="#222"/><rect x="173" y="296" width="365" height="364" fill="#fcfcfc"/></svg></div>
<div style="position:absolute;left:314px;top:184px;width:752px;height:2px;background:#262626;"></div>
<div style="position:absolute;left:321px;top:491px;font-size:17.5px;line-height:20px;color:#c4c4c4;white-space:nowrap;">500</div>
<div style="position:absolute;left:321px;top:855px;font-size:17.5px;line-height:20px;color:#c4c4c4;white-space:nowrap;">0</div>
<div style="position:absolute;left:342px;top:876px;font-size:17.5px;line-height:20px;color:#c4c4c4;white-space:nowrap;">0</div>
<div style="position:absolute;left:706px;top:876px;font-size:17.5px;line-height:20px;color:#c4c4c4;white-space:nowrap;">500</div>
<div style="position:absolute;left:673px;top:192px;font-size:18.3px;line-height:20px;color:#8e8e8e;white-space:nowrap;font-family:'Liberation Serif',serif;font-weight:bold;letter-spacing:0.38px;">使用鼠标右键平移视窗焦点，使用滚轮缩放视图</div>
<div style="position:absolute;left:312px;top:912px;width:756px;height:33px;background:#2b2b2b;"></div>
<div style="position:absolute;left:458px;top:912px;width:299px;height:33px;background:#333333;"></div>
<div style="position:absolute;left:312px;top:944px;width:756px;height:400px;background:#333333;border:2px solid #626262;border-bottom:none;box-sizing:border-box;"></div>
<div style="position:absolute;left:314px;top:946px;width:752px;height:43px;background:#474747;"></div>
<div style="position:absolute;left:312px;top:912px;width:146px;height:34px;background:#474747;border:2px solid #626262;border-bottom:none;box-sizing:border-box;"></div>
<svg style="position:absolute;left:325px;top:921px;" width="22" height="19" viewBox="0 0 22 19"><path d="M1 2 L8 9.5 L1 17" fill="none" stroke="#b0b0b0" stroke-width="2.4"/><g fill="#b0b0b0"><rect x="9" y="1" width="12" height="3"/><rect x="9" y="8" width="12" height="3"/><rect x="9" y="15" width="12" height="3"/></g><g fill="#111"><rect x="9" y="4" width="12" height="1"/><rect x="9" y="11" width="12" height="1"/><rect x="9" y="18" width="12" height="1"/></g></svg>
<div style="position:absolute;left:352px;top:921px;font-size:18px;line-height:20px;color:#cfcfcf;white-space:nowrap;">控制台</div>
<svg style="position:absolute;left:471px;top:922px;" width="25" height="18" viewBox="0 0 25 18"><g fill="#9a9a9a"><rect x="1" y="6" width="8" height="7"/><rect x="10" y="5" width="6" height="6"/><rect x="15" y="3" width="8" height="7"/><circle cx="5" cy="3" r="2.5"/><rect x="5" y="11" width="6" height="6"/></g></svg>
<div style="position:absolute;left:499px;top:921px;font-size:18px;line-height:20px;color:#cfcfcf;white-space:nowrap;">动画编辑器</div>
<svg style="position:absolute;left:623px;top:923px;" width="23" height="14" viewBox="0 0 23 14"><rect x="0" y="1" width="15" height="12" fill="#9a9a9a"/><path d="M15 5 L22 1 V13 L15 9Z" fill="#9a9a9a"/></svg>
<div style="position:absolute;left:651px;top:921px;font-size:18px;line-height:20px;color:#cfcfcf;white-space:nowrap;">游戏预览</div>
<svg style="position:absolute;left:1006px;top:921px;" width="15" height="15" viewBox="0 0 15 15"><g fill="none" stroke="#8a8a8a" stroke-width="2"><rect x="5" y="1" width="9" height="8"/><path d="M5 5 H1 V14 H10 V9"/></g></svg>
<svg style="position:absolute;left:1043px;top:923px;" width="14" height="11" viewBox="0 0 14 11"><g fill="#9a9a9a"><rect x="0" y="0" width="14" height="2"/><rect x="0" y="4.5" width="14" height="2"/><rect x="0" y="9" width="14" height="2"/></g></svg>
<svg style="position:absolute;left:329px;top:958px;" width="17" height="17" viewBox="0 0 17 17"><circle cx="8.5" cy="8.5" r="6.8" fill="none" stroke="#e86b6b" stroke-width="2.4"/><path d="M4 13 L13 4" stroke="#e86b6b" stroke-width="2.4"/></svg>
<svg style="position:absolute;left:371px;top:957px;" width="18" height="20" viewBox="0 0 18 20"><path d="M1.5 1.5 H11 L16.5 7 V18.5 H1.5Z" fill="none" stroke="#cfcfcf" stroke-width="1.8"/><path d="M11 1.5 V7 H16.5" fill="none" stroke="#cfcfcf" stroke-width="1.5"/><g fill="#cfcfcf"><rect x="4.5" y="9" width="9" height="1.6"/><rect x="4.5" y="12" width="9" height="1.6"/><rect x="4.5" y="15" width="9" height="1.6"/></g></svg>
<div style="position:absolute;left:403px;top:951px;width:240px;height:32px;background:#282828;border:2px solid #1c1c1c;border-radius:5px;box-sizing:border-box;"></div>
<div style="position:absolute;left:653px;top:956px;width:22px;height:23px;background:#2e2e2e;border:2px solid #222;border-radius:4px;box-sizing:border-box;"></div>
<div style="position:absolute;left:681px;top:957px;font-size:18px;line-height:20px;color:#cfcfcf;white-space:nowrap;">正则</div>
<div style="position:absolute;left:726px;top:951px;width:112px;height:32px;background:#2e2e2e;border-radius:16px;"></div>
<div style="position:absolute;left:742px;top:957px;font-size:18px;line-height:20px;color:#cfcfcf;white-space:nowrap;">All</div>
<svg style="position:absolute;left:810px;top:962px;" width="12" height="11" viewBox="0 0 12 11"><path d="M0 0 H12 L6 11Z" fill="#cfcfcf"/></svg>
<svg style="position:absolute;left:852px;top:957px;" width="18" height="21" viewBox="0 0 18 21"><g fill="#cfcfcf"><rect x="1" y="1" width="16" height="2"/><rect x="1" y="1" width="2" height="4"/><rect x="15" y="1" width="2" height="4"/><rect x="8" y="1" width="2.4" height="13"/><rect x="5" y="13" width="8" height="1.6"/><rect x="2" y="17.2" width="14" height="1.4"/><path d="M0 18 L4 15 V21Z M18 18 L14 15 V21Z"/></g></svg>
<div style="position:absolute;left:881px;top:951px;width:68px;height:32px;background:#2e2e2e;border-radius:16px;"></div>
<div style="position:absolute;left:896px;top:957px;font-size:18px;line-height:20px;color:#cfcfcf;white-space:nowrap;">14</div>
<svg style="position:absolute;left:922px;top:962px;" width="12" height="11" viewBox="0 0 12 11"><path d="M0 0 H12 L6 11Z" fill="#cfcfcf"/></svg>
<svg style="position:absolute;left:1038px;top:958px;" width="17" height="16" viewBox="0 0 17 16"><rect x="1.2" y="1.2" width="14.6" height="13.6" rx="2" fill="none" stroke="#cfcfcf" stroke-width="2.2"/><path d="M4.5 5.5 H12.5 L8.5 10.5Z" fill="#cfcfcf"/></svg>
<div style="position:absolute;left:1058px;top:998px;width:1px;height:340px;background:#1a1a1a;"></div>
<div style="position:absolute;left:1072px;top:121px;width:435px;height:33px;background:#323232;"></div>
<div style="position:absolute;left:1072px;top:153px;width:440px;height:1180px;background:#474747;border:2px solid #626262;box-sizing:border-box;border-right:none;border-bottom:none;"></div>
<div style="position:absolute;left:1072px;top:121px;width:146px;height:34px;background:#474747;border:2px solid #626262;border-bottom:none;box-sizing:border-box;"></div>
<div style="position:absolute;left:1084px;top:130px;font-size:18px;line-height:20px;color:#cfcfcf;white-space:nowrap;">定制场景菜单</div>
<svg style="position:absolute;left:1452px;top:129px;" width="15" height="15" viewBox="0 0 15 15"><g fill="none" stroke="#8a8a8a" stroke-width="2"><rect x="5" y="1" width="9" height="8"/><path d="M5 5 H1 V14 H10 V9"/></g></svg>
<svg style="position:absolute;left:1488px;top:131px;" width="14" height="11" viewBox="0 0 14 11"><g fill="#9a9a9a"><rect x="0" y="0" width="14" height="2"/><rect x="0" y="4.5" width="14" height="2"/><rect x="0" y="9" width="14" height="2"/></g></svg>
<div style="position:absolute;left:1081px;top:187px;font-size:27px;line-height:34px;color:#ff9a00;white-space:nowrap;font-weight:bold;-webkit-text-stroke:0.7px #ff9a00;">定制场景菜单</div>
<div style="position:absolute;left:1081px;top:242px;width:423px;height:2px;background:#6a6a6a;"></div>
<div style="position:absolute;left:1081px;top:266px;font-size:18px;line-height:20px;color:#d0d0d0;white-space:nowrap;">点击菜单项编辑属性，右击添加/删除菜单项</div>
<div style="position:absolute;left:1126px;top:313px;width:103px;height:21px;background:#4d4d4d;"></div>
<svg style="position:absolute;left:1103px;top:316px;" width="18" height="15" viewBox="0 0 18 15"><path d="M0 0 H18 L9 15Z" fill="#d8d8d8"/></svg>
<div style="position:absolute;left:1126px;top:313px;font-size:18px;line-height:20px;color:#d6d6d6;white-space:nowrap;">(菜单根节点)</div>
<svg style="position:absolute;left:1135px;top:344px;" width="16" height="17" viewBox="0 0 16 17"><path d="M0 0 L16 8.5 L0 17Z" fill="#d8d8d8"/></svg>
<div style="position:absolute;left:1156px;top:342px;font-size:18px;line-height:20px;color:#d6d6d6;white-space:nowrap;">创建敌人</div>
<svg style="position:absolute;left:1133px;top:376px;" width="18" height="15" viewBox="0 0 18 15"><path d="M0 0 H18 L9 15Z" fill="#d8d8d8"/></svg>
<div style="position:absolute;left:1156px;top:374px;font-size:18px;line-height:20px;color:#d6d6d6;white-space:nowrap;">创建道具</div>
<div style="position:absolute;left:1187px;top:404px;font-size:18px;line-height:20px;color:#d6d6d6;white-space:nowrap;">时钟</div>
<div style="position:absolute;left:1187px;top:436px;font-size:18px;line-height:20px;color:#d6d6d6;white-space:nowrap;">盾牌</div>
<div style="position:absolute;left:1156px;top:470px;font-size:18px;line-height:20px;color:#d6d6d6;white-space:nowrap;">编辑菜单</div>
<div style="position:absolute;left:1081px;top:516px;width:423px;height:1px;background:#5e5e5e;"></div>
<div style="position:absolute;left:1081px;top:532px;width:129px;height:39px;background:#555555;border:2px solid #1c1c1c;border-radius:4px;box-sizing:border-box;"></div>
<div style="position:absolute;left:1109px;top:542px;font-size:18px;line-height:20px;color:#d0d0d0;white-space:nowrap;font-weight:bold;">保存菜单</div>
</body></html>
